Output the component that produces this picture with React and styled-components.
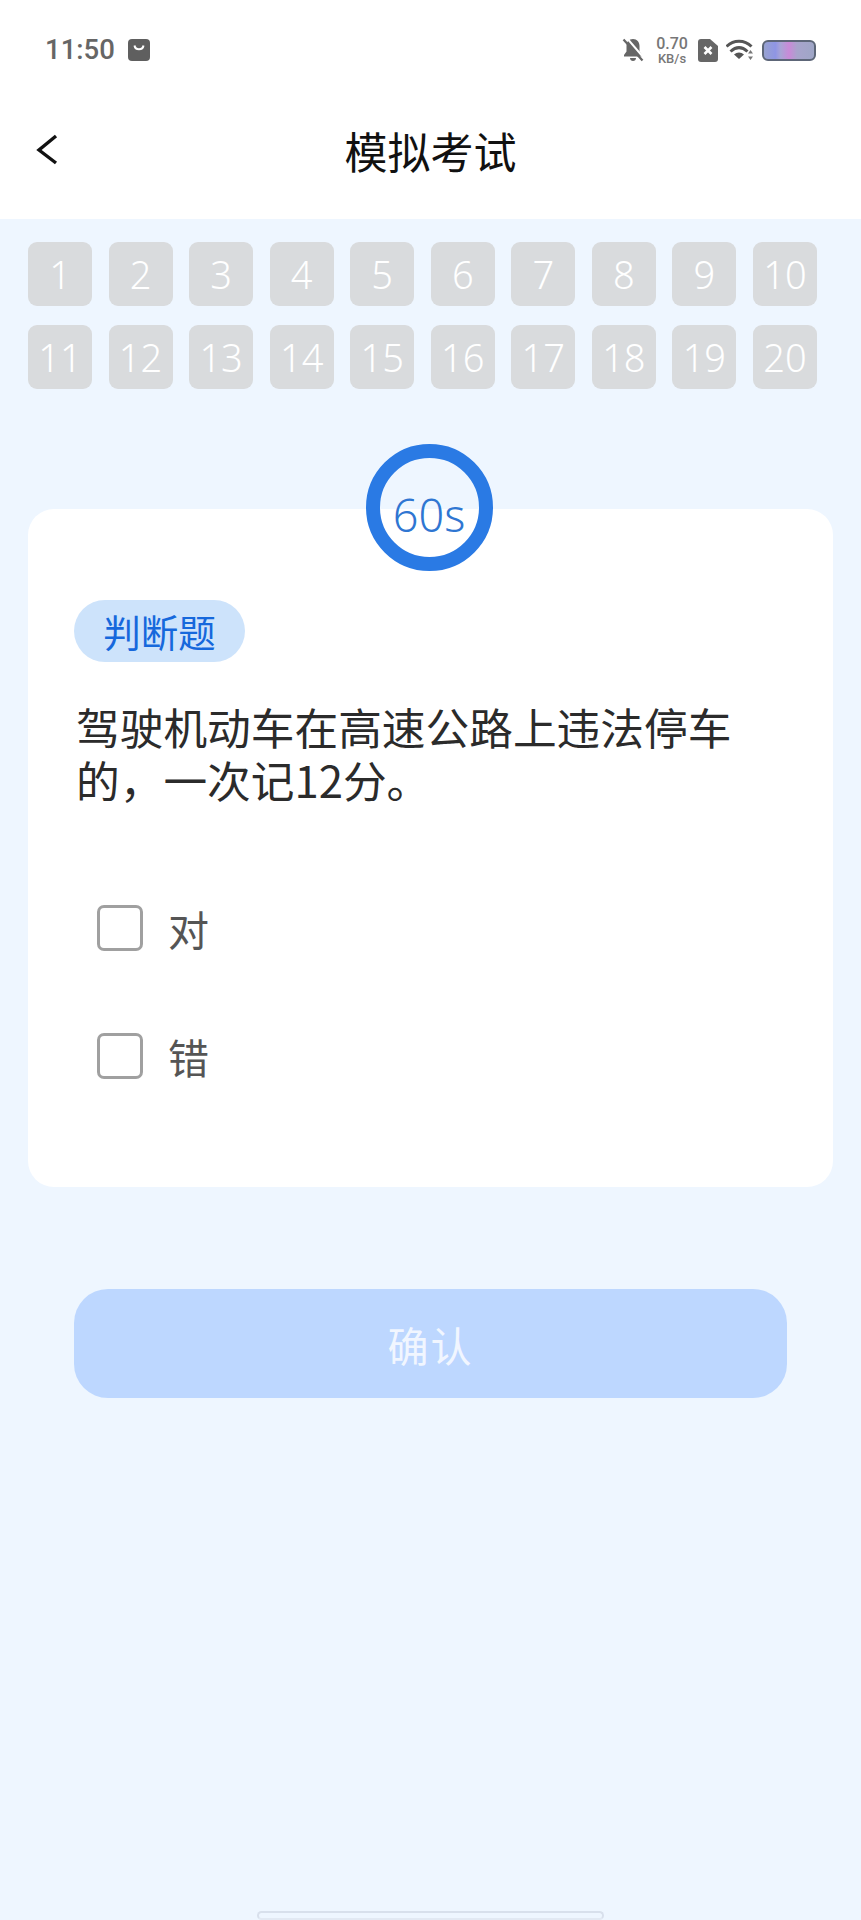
import React from "react";
import styled, { createGlobalStyle } from "styled-components";

const FONT = `"Noto Sans CJK SC", "Noto Sans", sans-serif`;

const Global = createGlobalStyle`
  html, body { margin: 0; padding: 0; background: #eef6ff; }
  * { box-sizing: border-box; }
`;

const Page = styled.div`
  width: 861px;
  height: 1920px;
  overflow: hidden;
  background: #eef6ff;
  font-family: ${FONT};
  display: flex;
  flex-direction: column;
`;

const Header = styled.header`
  height: 219px;
  background: #fff;
  display: flex;
  flex-direction: column;
`;

const StatusBar = styled.div`
  height: 100px;
  padding: 0 45px 0 45px;
  display: flex;
  align-items: center;
  justify-content: space-between;
`;

const StatusLeft = styled.div`
  display: flex;
  align-items: center;
  gap: 13px;
`;

const Clock = styled.span`
  font-family: "Roboto", sans-serif;
  font-size: 27.5px;
  font-weight: 500;
  line-height: 1;
  color: #666;
`;

const StatusRight = styled.div`
  display: flex;
  align-items: center;
  gap: 8px;
`;

const Speed = styled.div`
  width: 36px;
  margin: 0 0 0 2px;
  display: flex;
  flex-direction: column;
  align-items: center;
  font-family: "Roboto", sans-serif;
  font-weight: 500;
  color: #777;
`;

const SpeedValue = styled.span`
  font-size: 16px;
  line-height: 16px;
`;

const SpeedUnit = styled.span`
  font-size: 13px;
  line-height: 13px;
`;

const Nav = styled.div`
  position: relative;
  height: 100px;
  display: flex;
  align-items: center;
  justify-content: center;
`;

const Back = styled.svg`
  position: absolute;
  left: 36px;
  top: 33px;
`;

const Title = styled.h1`
  margin: 0;
  font-size: 43px;
  font-weight: 400;
  line-height: 1;
  color: #111;
`;

const NumberGrid = styled.div`
  margin: 23px 44px 0 28px;
  display: grid;
  grid-template-columns: repeat(10, 64px);
  justify-content: space-between;
  row-gap: 19px;
`;

const NumberCell = styled.div`
  height: 64px;
  border-radius: 9px;
  background: #d9dbdd;
  color: #fff;
  font-family: "Noto Sans", sans-serif;
  font-size: 38px;
  font-weight: 300;
  line-height: 64px;
  text-align: center;
`;

const Ring = styled.div`
  position: relative;
  z-index: 1;
  align-self: center;
  width: 127px;
  height: 127px;
  margin: 55px 0 -62px -3px;
  padding-top: 14px;
  border: 14px solid #2a7ae4;
  border-radius: 50%;
  display: flex;
  align-items: center;
  justify-content: center;
  color: #2f76d2;
  font-family: "Noto Sans", sans-serif;
  font-size: 45px;
  font-weight: 300;
  line-height: 1;
`;

const Card = styled.section`
  margin: 0 28px;
  height: 678px;
  padding: 91px 46px 0;
  background: #fff;
  border-radius: 26px;
`;

const Tag = styled.span`
  display: block;
  width: 171px;
  height: 62px;
  border-radius: 31px;
  background: #cde3fb;
  color: #1668dc;
  font-size: 37.5px;
  line-height: 62px;
  text-align: center;
`;

const Question = styled.p`
  margin: 38px 40px 0 2px;
  font-size: 43.7px;
  line-height: 53px;
  color: #2b2b2b;
`;

const Options = styled.div`
  margin: 99px 0 0 23px;
  display: flex;
  flex-direction: column;
  gap: 82px;
`;

const Option = styled.label`
  display: flex;
  align-items: center;
  gap: 25px;
  height: 46px;
  color: #555;
  font-size: 41px;
  line-height: 1;
`;

const Box = styled.span`
  width: 46px;
  height: 46px;
  border: 3px solid #a0a0a0;
  border-radius: 7px;
  background: #fff;
`;

const Confirm = styled.button`
  margin: 102px 0 0 74px;
  width: 713px;
  height: 109px;
  border: 0;
  border-radius: 34px;
  background: #bdd7ff;
  color: #f1f6ff;
  font-family: ${FONT};
  font-size: 41px;
  letter-spacing: 2px;
`;

const HomeBar = styled.div`
  margin: auto 0 0 257px;
  width: 347px;
  height: 9px;
  border: 2px solid #d8e0ec;
  border-bottom-color: #e2e9f3;
  border-radius: 5px;
`;

const BellOff = () => (
  <svg width="22" height="26" viewBox="0 0 22 26">
    <path d="M11 2c-4 0-6.500 3-6.500 7v5.500L2 18v1.500h18V18l-2.500-3.500V9c0-4-2.500-7-6.500-7z" fill="#666" />
    <path d="M8 21h6c0 2-1.300 3-3 3s-3-1-3-3z" fill="#666" />
    <path d="M4 0l18 21" stroke="#fff" strokeWidth="2" />
    <path d="M1.500 2.500l19 21" stroke="#666" strokeWidth="2.200" />
  </svg>
);

const SimIcon = () => (
  <svg width="20" height="23" viewBox="0 0 20 23">
    <path d="M3 0h9l8 7v13a3 3 0 0 1-3 3H3a3 3 0 0 1-3-3V3a3 3 0 0 1 3-3z" fill="#666" />
    <path d="M6.500 8l7 7M13.500 8l-7 7" stroke="#fff" strokeWidth="2.600" />
  </svg>
);

const WifiIcon = () => (
  <svg width="28" height="22" viewBox="0 0 28 22">
    <g fill="none" stroke="#555" strokeWidth="3">
      <path d="M0.500 7.500c7-7 18-7 25 0" />
      <path d="M4.500 12.500c5.500-5 11.500-5 17 0" />
    </g>
    <path d="M13 20l-5-4.500c3-2.700 7-2.700 10 0z" fill="#555" />
    <path d="M24.500 11l2.500 3.500h-5zM24.500 21l-2.500-3.500h5z" fill="#777" />
  </svg>
);

const BatteryIcon = () => (
  <svg width="54" height="21" viewBox="0 0 54 21">
    <defs>
      <linearGradient id="charge" x1="0" x2="1" y1="0" y2="0">
        <stop offset="0" stopColor="#98a3cf" />
        <stop offset="0.24" stopColor="#8f95e4" />
        <stop offset="0.34" stopColor="#a9a4d6" />
        <stop offset="0.5" stopColor="#c98ad8" />
        <stop offset="0.66" stopColor="#a8a4cc" />
        <stop offset="1" stopColor="#9ea6c6" />
      </linearGradient>
    </defs>
    <rect x="1" y="1" width="52" height="19" rx="5" fill="url(#charge)" stroke="#5d6678" strokeWidth="2" />
  </svg>
);

const rows = Array.from({ length: 20 }, (_, i) => i + 1);

export default function App() {
  return (
    <Page>
      <Global />
      <Header>
        <StatusBar>
          <StatusLeft>
            <Clock>11:50</Clock>
            <svg width="22" height="22" viewBox="0 0 22 22">
              <rect width="22" height="22" rx="4" fill="#5f5f5f" />
              <path d="M6.500 6.500c.8 5 8.200 5 9 0" fill="none" stroke="#fff" strokeWidth="2" />
            </svg>
          </StatusLeft>
          <StatusRight>
            <BellOff />
            <Speed>
              <SpeedValue>0.70</SpeedValue>
              <SpeedUnit>KB/s</SpeedUnit>
            </Speed>
            <SimIcon />
            <WifiIcon />
            <BatteryIcon />
          </StatusRight>
        </StatusBar>
        <Nav>
          <Back width="24" height="34" viewBox="0 0 24 34">
            <path d="M20 3L3 17l17 13" fill="none" stroke="#111" strokeWidth="3.400" />
          </Back>
          <Title>模拟考试</Title>
        </Nav>
      </Header>
      <NumberGrid>
        {rows.map((n) => (
          <NumberCell key={n}>{n}</NumberCell>
        ))}
      </NumberGrid>
      <Ring>60s</Ring>
      <Card>
        <Tag>判断题</Tag>
        <Question>驾驶机动车在高速公路上违法停车的，一次记12分。</Question>
        <Options>
          <Option><Box />对</Option>
          <Option><Box />错</Option>
        </Options>
      </Card>
      <Confirm>确认</Confirm>
      <HomeBar />
    </Page>
  );
}
